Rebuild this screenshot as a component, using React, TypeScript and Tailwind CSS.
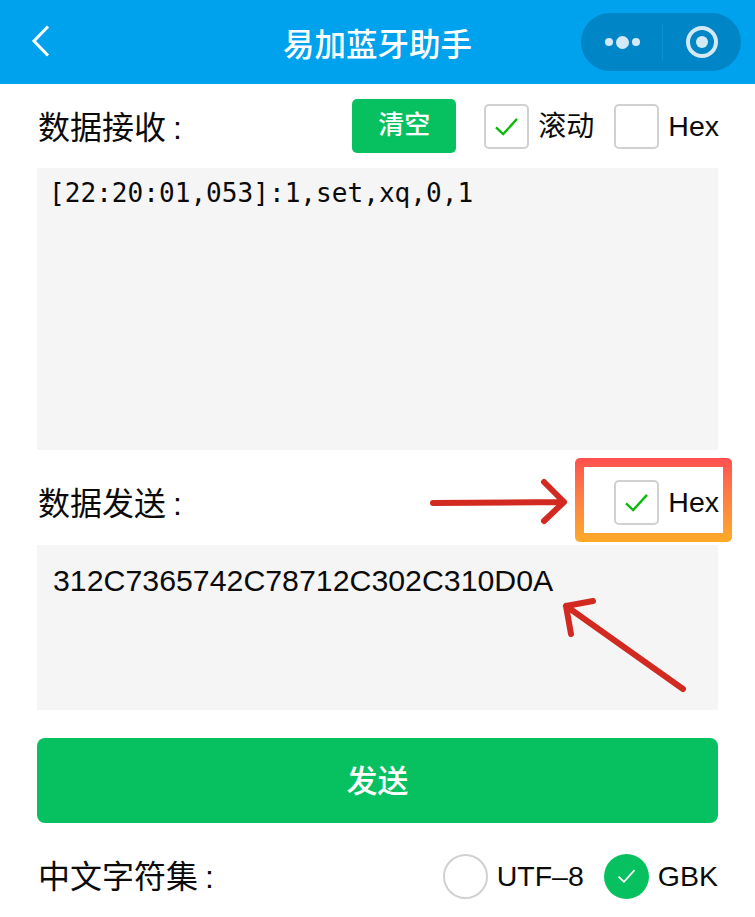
const cjk = "font-['Liberation_Sans','Noto_Sans_CJK_SC',sans-serif]";

function Tick({ className }: { className: string }) {
  return (
    <svg viewBox="0 0 26 22" className={className} fill="none" stroke="currentColor" strokeWidth="2.4">
      <path d="M2 12 L9.5 19 L24 3" />
    </svg>
  );
}

function Box({ checked }: { checked?: boolean }) {
  return (
    <div className="w-[45px] h-[45px] shrink-0 flex items-center justify-center rounded-[5px] border-2 border-[#d1d1d1] bg-white">
      {checked && <Tick className="w-[25px] h-[21px] text-[#09bb07]" />}
    </div>
  );
}

function Radio({ checked }: { checked?: boolean }) {
  return checked ? (
    <div className="w-[45px] h-[45px] shrink-0 rounded-full bg-[#07c160] flex items-center justify-center">
      <Tick className="w-[19px] h-[16px] text-white" />
    </div>
  ) : (
    <div className="w-[45px] h-[45px] shrink-0 rounded-full border-2 border-[#d1d1d1] bg-white" />
  );
}

export default function App() {
  return (
    <div className={`relative w-[755px] h-[917px] overflow-hidden bg-white text-[#0b0b0b] ${cjk}`}>
      <header className="relative h-[84px] bg-[#00a2ee] flex items-center justify-between pl-[31px] pr-[14px]">
        <svg viewBox="0 0 20 32" className="w-[20px] h-[32px] text-white mb-[3px]" fill="none" stroke="currentColor" strokeWidth="3">
          <path d="M17 1.5 L3 16 L17 30.5" />
        </svg>
        <div className="absolute left-0 right-0 top-[22px] text-center text-white text-[31.5px] leading-[46px] font-medium">易加蓝牙助手</div>
        <div className="w-[160px] h-[58px] rounded-full bg-[#0085c6] flex items-center">
          <div className="w-[81px] flex items-center justify-center gap-[3px] pl-[2px]">
            <span className="w-[8px] h-[8px] rounded-full bg-[#d3eaf6]" />
            <span className="w-[13px] h-[13px] rounded-full bg-[#d3eaf6]" />
            <span className="w-[8px] h-[8px] rounded-full bg-[#d3eaf6]" />
          </div>
          <div className="w-px h-[36px] bg-[#0c91d2]" />
          <div className="flex-1 flex items-center justify-center">
            <div className="w-[32px] h-[32px] rounded-full border-[4px] border-[#d3eaf6] flex items-center justify-center">
              <span className="w-[12px] h-[12px] rounded-full bg-[#d3eaf6]" />
            </div>
          </div>
        </div>
      </header>

      <main className="px-[37px]">
        <section className="h-[84px] flex items-center">
          <h2 className="text-[32px] font-normal leading-none mr-auto pl-px mt-[3px] [word-spacing:-2px]">数据接收 :</h2>
          <button className="w-[104px] h-[54px] rounded-[5px] bg-[#07c160] text-white text-[26px] font-medium mr-[28px] -mt-[1px]">清空</button>
          <div className="flex items-center gap-[9px] mr-[20px] mt-[1px]">
            <Box checked />
            <span className="text-[28px]">滚动</span>
          </div>
          <div className="flex items-center gap-[9px] mt-[1px] -mr-[1px]">
            <Box />
            <span className="text-[28.5px]">Hex</span>
          </div>
        </section>

        <div className="h-[282px] bg-[#f5f5f5] pl-[12px] pt-[7px] font-['DejaVu_Sans_Mono',monospace] text-[26.1px] leading-[36px]">
          [22:20:01,053]:1,set,xq,0,1
        </div>

        <section className="h-[95px] flex items-start justify-between">
          <h2 className="text-[32px] font-normal leading-none pl-px mt-[38px] [word-spacing:-2px]">数据发送 :</h2>
          <div className="mt-[8px] -mr-[14px] w-[157px] h-[84px] rounded-[5px] bg-gradient-to-b from-[#ff4f4f] to-[#ffaa26] p-[9px]">
            <div className="w-full h-full bg-white flex items-center justify-end gap-[9px] pr-[4px] pt-[5px]">
              <Box checked />
              <span className="text-[28.5px]">Hex</span>
            </div>
          </div>
        </section>

        <div className="h-[165px] bg-[#f5f5f5] pl-[16px] pt-[18px] text-[30.3px] leading-[36px]">312C7365742C78712C302C310D0A</div>

        <button className="mt-[28px] w-full h-[85px] rounded-[8px] bg-[#07c160] text-white text-[31px] font-medium block pt-[3px]">发送</button>

        <section className="mt-[18px] h-[72px] flex items-center">
          <h2 className="text-[32px] font-normal leading-none mr-auto pl-px [word-spacing:-2px]">中文字符集 :</h2>
          <div className="flex items-center gap-[9px] mr-[20px] -mt-[2px]">
            <Radio />
            <span className="text-[28.5px]">UTF–8</span>
          </div>
          <div className="flex items-center gap-[9px] -mt-[2px]">
            <Radio checked />
            <span className="text-[28.5px]">GBK</span>
          </div>
        </section>
      </main>

      <svg className="absolute left-0 top-0 w-[755px] h-[917px] pointer-events-none" viewBox="0 0 755 917" fill="none" stroke="#d22a20" strokeWidth="6" strokeLinecap="round" strokeLinejoin="round">
        <path d="M433 503 L564 502 M544 482 L564 502 L544 521" />
        <path d="M683 689 L566 606 M593 601 L566 606 L571 634" />
      </svg>
    </div>
  );
}
